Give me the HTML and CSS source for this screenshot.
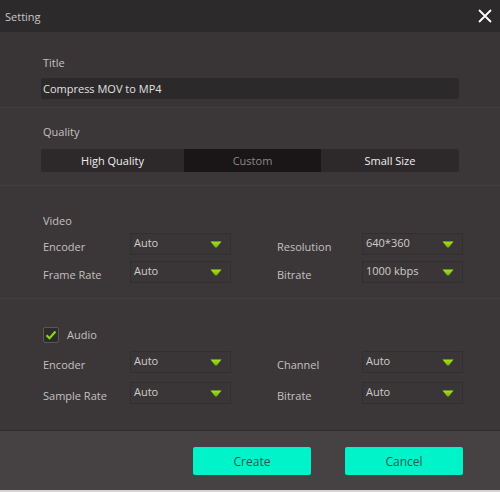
FILE: index.html
```html
<!DOCTYPE html>
<html>
<head>
<meta charset="utf-8">
<link rel="stylesheet" href="styles.css">
</head>
<body>
<div class="window">
  <div class="titlebar">
    <span class="title-text">Setting</span>
    <svg class="close" width="16" height="16" viewBox="0 0 16 16"><path d="M2 2L14 14M14 2L2 14" stroke="#ffffff" stroke-width="1.8" fill="none"/></svg>
  </div>
  <div class="content">
    <section class="sec sec-title">
      <div class="label">Title</div>
      <div class="input">Compress MOV to MP4</div>
    </section>
    <section class="sec sec-quality">
      <div class="label">Quality</div>
      <div class="segmented">
        <div class="seg">High Quality</div>
        <div class="seg active">Custom</div>
        <div class="seg">Small Size</div>
      </div>
    </section>
    <section class="sec sec-video">
      <div class="label">Video</div>
      <div class="grid">
        <div class="flabel">Encoder</div>
        <div class="select"><span>Auto</span><svg class="arrow" width="12" height="7" viewBox="0 0 12 7"><defs><linearGradient id="g1" x1="0" y1="0" x2="0" y2="1"><stop offset="0" stop-color="#a8e21c"/><stop offset="1" stop-color="#6fb40a"/></linearGradient></defs><path d="M0.5 0.5H11.5L7 6.2Q6 7 5 6.2Z" fill="url(#g1)"/></svg></div>
        <div></div>
        <div class="flabel">Resolution</div>
        <div class="select"><span>640*360</span><svg class="arrow" width="12" height="7" viewBox="0 0 12 7"><path d="M0.5 0.5H11.5L7 6.2Q6 7 5 6.2Z" fill="url(#g1)"/></svg></div>
        <div class="flabel">Frame Rate</div>
        <div class="select"><span>Auto</span><svg class="arrow" width="12" height="7" viewBox="0 0 12 7"><path d="M0.5 0.5H11.5L7 6.2Q6 7 5 6.2Z" fill="url(#g1)"/></svg></div>
        <div></div>
        <div class="flabel">Bitrate</div>
        <div class="select"><span>1000 kbps</span><svg class="arrow" width="12" height="7" viewBox="0 0 12 7"><path d="M0.5 0.5H11.5L7 6.2Q6 7 5 6.2Z" fill="url(#g1)"/></svg></div>
      </div>
    </section>
    <section class="sec sec-audio">
      <div class="check-row">
        <span class="checkbox"><svg width="12" height="10" viewBox="0 0 12 10"><path d="M1.5 5.2L4.5 8.2L10.5 1.5" stroke="#8ed41a" stroke-width="2.2" fill="none"/></svg></span>
        <span class="check-label">Audio</span>
      </div>
      <div class="grid grid-audio">
        <div class="flabel">Encoder</div>
        <div class="select"><span>Auto</span><svg class="arrow" width="12" height="7" viewBox="0 0 12 7"><path d="M0.5 0.5H11.5L7 6.2Q6 7 5 6.2Z" fill="url(#g1)"/></svg></div>
        <div></div>
        <div class="flabel">Channel</div>
        <div class="select"><span>Auto</span><svg class="arrow" width="12" height="7" viewBox="0 0 12 7"><path d="M0.5 0.5H11.5L7 6.2Q6 7 5 6.2Z" fill="url(#g1)"/></svg></div>
        <div class="flabel">Sample Rate</div>
        <div class="select"><span>Auto</span><svg class="arrow" width="12" height="7" viewBox="0 0 12 7"><path d="M0.5 0.5H11.5L7 6.2Q6 7 5 6.2Z" fill="url(#g1)"/></svg></div>
        <div></div>
        <div class="flabel">Bitrate</div>
        <div class="select"><span>Auto</span><svg class="arrow" width="12" height="7" viewBox="0 0 12 7"><path d="M0.5 0.5H11.5L7 6.2Q6 7 5 6.2Z" fill="url(#g1)"/></svg></div>
      </div>
    </section>
  </div>
  <div class="footer">
    <button class="btn">Create</button>
    <button class="btn">Cancel</button>
  </div>
</div>
</body>
</html>
```
FILE: styles.css
```css
html, body {
  margin: 0;
  padding: 0;
  background: #3b3738;
}
body {
  font-family: "Open Sans", "Noto Sans", sans-serif;
  font-size: 11px;
  color: #c4c0c0;
}
.window {
  width: 500px;
  height: 492px;
  display: flex;
  flex-direction: column;
  background: #3b3738;
  box-sizing: border-box;
  border-bottom: 2px solid #d4d2d2;
}
.titlebar {
  height: 32px;
  flex: 0 0 32px;
  background: #2d2a2b;
  display: flex;
  align-items: center;
  justify-content: space-between;
  padding: 0 7px 0 5px;
}
.title-text {
  color: #c8c6c6;
  font-size: 11px;
}
.close {
  display: block;
}
.content {
  flex: 1;
  display: flex;
  flex-direction: column;
}
.sec {
  padding-left: 41px;
  padding-right: 41px;
  border-bottom: 1px solid #433f40;
}
.label {
  line-height: 15px;
  height: 15px;
  padding-left: 2px;
  color: #c4c0c0;
}
.sec-title {
  padding-top: 23px;
  padding-bottom: 8px;
  background: #393536;
}
.input {
  margin-top: 8px;
  height: 21px;
  line-height: 21px;
  background: #2c292a;
  border-radius: 2px;
  padding-left: 2px;
  color: #e2e0e0;
}
.sec-quality {
  padding-top: 16px;
  padding-bottom: 13px;
}
.segmented {
  margin-top: 10px;
  height: 23px;
  display: flex;
  background: #2d292a;
  border-radius: 2px;
  overflow: hidden;
}
.seg {
  line-height: 23px;
  text-align: center;
  color: #f0eeee;
}
.seg:nth-child(1) { width: 143px; }
.seg:nth-child(2) { width: 137px; }
.seg:nth-child(3) { flex: 1; }
.seg.active {
  background: #1a1617;
  color: #8c8787;
}
.sec-video {
  padding-top: 27px;
  padding-bottom: 15px;
}
.grid {
  margin-top: 5px;
  display: grid;
  grid-template-columns: 89px 101px 44px 87px 101px;
  grid-auto-rows: 22px;
  row-gap: 6px;
  align-items: center;
}
.flabel {
  padding-left: 2px;
  padding-top: 4px;
  color: #c4c0c0;
}
.select {
  height: 22px;
  box-sizing: border-box;
  border: 1px solid #332f30;
  background: #3a3637;
  display: flex;
  align-items: center;
  justify-content: space-between;
  padding: 0 8px 0 3px;
  color: #cfcccc;
}
.select span {
  margin-top: -3px;
}
.arrow {
  display: block;
}
.sec-audio {
  flex: 1;
  border-bottom: 1px solid #2f2c2d;
  padding-top: 28px;
}
.check-row {
  display: flex;
  align-items: center;
  padding-left: 2px;
  height: 16px;
}
.checkbox {
  width: 16px;
  height: 16px;
  box-sizing: border-box;
  border: 1px solid #5a5656;
  border-radius: 2px;
  background: #2e2b2c;
  display: flex;
  align-items: center;
  justify-content: center;
}
.check-label {
  margin-left: 8px;
  margin-top: -1px;
  color: #c4c0c0;
}
.grid-audio {
  margin-top: 8px;
  row-gap: 9px;
}
.footer {
  height: 59px;
  flex: 0 0 59px;
  background: #464243;
  display: flex;
  justify-content: flex-end;
  align-items: flex-start;
  gap: 34px;
  padding: 16px 37px 0 0;
  box-sizing: border-box;
}
.btn {
  width: 118px;
  height: 28px;
  border: none;
  border-radius: 2px;
  background: #00f3c9;
  color: #2c5a52;
  font-family: "Open Sans", "Noto Sans", sans-serif;
  font-size: 12px;
  padding: 0;
}
```
